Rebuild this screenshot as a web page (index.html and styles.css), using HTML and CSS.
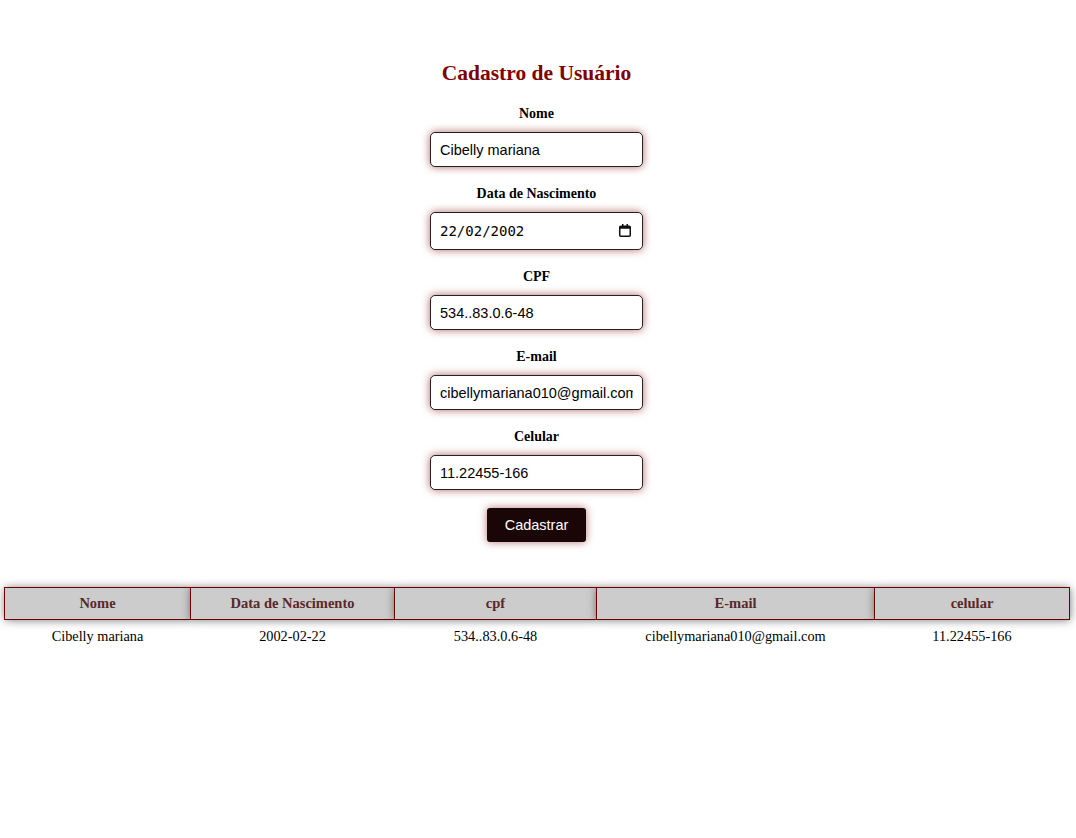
FILE: index.html
```html
<!DOCTYPE html>
<html lang="pt-BR">
<head>
<meta charset="utf-8">
<title>Cadastro de Usuário</title>
<link rel="stylesheet" href="styles.css">
</head>
<body>
<main class="page">
  <form class="form">
    <h2 class="title">Cadastro de Usuário</h2>
    <label class="label" for="nome">Nome</label>
    <input class="field" id="nome" type="text" value="Cibelly mariana">
    <label class="label" for="nasc">Data de Nascimento</label>
    <div class="date-wrap">
      <input class="field field-date" id="nasc" type="text" value="22/02/2002">
      <svg class="cal-icon" width="12" height="13" viewBox="0 0 12 13" aria-hidden="true">
        <rect x="3" y="0" width="1.5" height="2.5" fill="#111"/>
        <rect x="7.5" y="0" width="1.5" height="2.5" fill="#111"/>
        <rect x="0.75" y="2.25" width="10.5" height="10" rx="1" fill="none" stroke="#111" stroke-width="1.5"/>
        <rect x="0.75" y="2.25" width="10.5" height="2.5" fill="#111"/>
      </svg>
    </div>
    <label class="label" for="cpf">CPF</label>
    <input class="field" id="cpf" type="text" value="534..83.0.6-48">
    <label class="label" for="email">E-mail</label>
    <input class="field" id="email" type="text" value="cibellymariana010@gmail.com">
    <label class="label" for="cel">Celular</label>
    <input class="field" id="cel" type="text" value="11.22455-166">
    <button class="btn" type="button">Cadastrar</button>
  </form>
  <div class="table-wrap">
    <table class="users">
      <thead>
        <tr>
          <th class="c-nome">Nome</th>
          <th class="c-data">Data de Nascimento</th>
          <th class="c-cpf">cpf</th>
          <th class="c-email">E-mail</th>
          <th class="c-cel">celular</th>
        </tr>
      </thead>
      <tbody>
        <tr>
          <td>Cibelly mariana</td>
          <td>2002-02-22</td>
          <td>534..83.0.6-48</td>
          <td>cibellymariana010@gmail.com</td>
          <td>11.22455-166</td>
        </tr>
      </tbody>
    </table>
  </div>
</main>
</body>
</html>
```
FILE: styles.css
```css
html, body {
  margin: 0;
  padding: 0;
  background: #ffffff;
}

body {
  font-family: "Liberation Serif", "Times New Roman", serif;
  color: #000;
}

.page {
  padding-top: 60px;
}

.form {
  display: flex;
  flex-direction: column;
  align-items: center;
  padding-right: 3px;
}

.title {
  margin: 0 0 20px;
  font-size: 21.5px;
  line-height: 26px;
  font-weight: bold;
  color: #800000;
}

.label {
  display: block;
  font-size: 14px;
  line-height: 16px;
  font-weight: bold;
  margin-bottom: 10px;
}

.field {
  box-sizing: border-box;
  width: 213px;
  height: 35px;
  padding: 0 9px;
  border: 1px solid #222;
  border-radius: 5px;
  background: #fff;
  font-family: "Liberation Sans", Arial, sans-serif;
  font-size: 14.5px;
  color: #000;
  box-shadow: 0 0 9px rgba(128, 0, 0, 0.6);
  margin-bottom: 19px;
  outline: none;
}

.date-wrap {
  position: relative;
  display: flex;
}

.field-date {
  height: 38px;
  font-family: "DejaVu Sans Mono", "Liberation Mono", monospace;
  font-size: 14px;
}

.cal-icon {
  position: absolute;
  right: 12px;
  top: 12px;
}

.btn {
  margin-top: -1px;
  width: 99px;
  height: 34px;
  border: none;
  border-radius: 3px;
  background: #1a0606;
  color: #fff;
  font-family: "Liberation Sans", Arial, sans-serif;
  font-size: 14.5px;
  box-shadow: 0 0 8px rgba(128, 0, 0, 0.55);
}

.table-wrap {
  padding: 45px 7px 0 4px;
}

.users {
  width: 100%;
  border-collapse: collapse;
  table-layout: fixed;
}

.users th {
  height: 32px;
  box-sizing: border-box;
  padding: 0 4px;
  background: #cccccc;
  border: 1px solid #6b0000;
  color: #5a2828;
  font-size: 14.5px;
  font-weight: bold;
  box-shadow: 0 0 10px rgba(0, 0, 0, 0.55);
}

.c-nome { width: 186px; }
.c-data { width: 204px; }
.c-cpf { width: 202px; }
.c-email { width: 278px; }
.c-cel { width: 195px; }

.users td {
  padding: 8px 4px 6px;
  text-align: center;
  font-size: 14.3px;
  line-height: 16px;
}
```
